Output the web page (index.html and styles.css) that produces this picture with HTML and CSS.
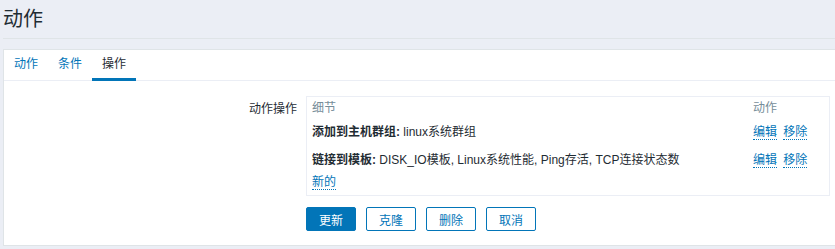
FILE: index.html
```html
<!DOCTYPE html>
<html lang="zh-CN">
<head>
    <meta charset="UTF-8">
    <title>动作</title>
    <link rel="stylesheet" href="styles.css">
</head>
<body>
    <div class="header">
        <h1>动作</h1>
    </div>

    <div class="container">
        <ul class="tabs">
            <li><a href="#">动作</a></li>
            <li><a href="#">条件</a></li>
            <li class="active"><a href="#">操作</a></li>
        </ul>

        <div class="form">
            <div class="form-label">动作操作</div>
            <div class="form-field">
                <table class="op-table">
                    <tr class="head-row">
                        <td>细节</td>
                        <td class="col-actions">动作</td>
                    </tr>
                    <tr class="row-first">
                        <td><b>添加到主机群组:</b> linux系统群组</td>
                        <td class="col-actions"><a class="link" href="#">编辑</a> <a class="link" href="#">移除</a></td>
                    </tr>
                    <tr class="row-second">
                        <td><b>链接到模板:</b> DISK_IO模板, Linux系统性能, Ping存活, TCP连接状态数</td>
                        <td class="col-actions"><a class="link" href="#">编辑</a> <a class="link" href="#">移除</a></td>
                    </tr>
                    <tr class="row-new">
                        <td colspan="2"><a class="link" href="#">新的</a></td>
                    </tr>
                </table>
            </div>

            <div></div>
            <div class="buttons">
                <button class="btn btn-primary">更新</button>
                <button class="btn">克隆</button>
                <button class="btn">删除</button>
                <button class="btn">取消</button>
            </div>
        </div>
    </div>
</body>
</html>
```

FILE: styles.css
```css
body {
    margin: 0;
    background-color: #ebeef5;
    color: #1f2c33;
    font-family: "Liberation Sans", "Noto Sans CJK SC", sans-serif;
    font-size: 12px;
    line-height: 14px;
    overflow: hidden;
}
.header {
    height: 38px;
    margin: 0 0 0 3px;
    border-bottom: 1px solid #dfe4e7;
}
.header h1 {
    margin: 0;
    font-size: 20px;
    font-weight: normal;
    line-height: 38px;
}
.container {
    margin: 10px 0 0 3px;
    width: 840px;
    background: white;
    border: 1px solid #dfe4e7;
    padding-bottom: 14px;
}
/* Tabs */
.tabs {
    display: flex;
    list-style: none;
    margin: 0;
    padding: 0;
    height: 30px;
    border-bottom: 1px solid #ebeef5;
}
.tabs li {
    height: 28px;
    margin-bottom: -1px;
    border-bottom: 3px solid transparent;
}
.tabs li a {
    display: block;
    padding: 0 10px;
    line-height: 28px;
    color: #0275b8;
    text-decoration: none;
}
.tabs li.active {
    border-bottom-color: #0275b8;
}
.tabs li.active a {
    color: #1f2c33;
}
/* Form */
.form {
    display: grid;
    grid-template-columns: 293px 524px;
    column-gap: 9px;
    row-gap: 11px;
    padding-top: 15px;
}
.form-label {
    text-align: right;
    padding-top: 6px;
}
.form-field {
    border: 1px solid #ebeef5;
}
.op-table {
    width: 100%;
    border-collapse: collapse;
}
.op-table td {
    padding: 5px 5px 5px 5px;
    vertical-align: top;
    white-space: nowrap;
}
.op-table .col-actions {
    width: 71px;
}
.col-actions .link:first-child {
    margin-right: 3px;
}
.head-row td {
    padding: 4px 5px 5px;
    color: #768d99;
}
.row-second td {
    padding-top: 9px;
}
.row-new td {
    padding-top: 3px;
    padding-bottom: 6px;
}
.link {
    color: #0275b8;
    text-decoration: none;
    border-bottom: 1px dotted #0275b8;
}
/* Buttons */
.buttons {
    display: flex;
    gap: 10px;
}
.btn {
    height: 24px;
    padding: 0 12px;
    font-family: inherit;
    font-size: 12px;
    color: #0275b8;
    background: white;
    border: 1px solid #0275b8;
    border-radius: 2px;
}
.btn-primary {
    color: white;
    background: #0275b8;
}
```
